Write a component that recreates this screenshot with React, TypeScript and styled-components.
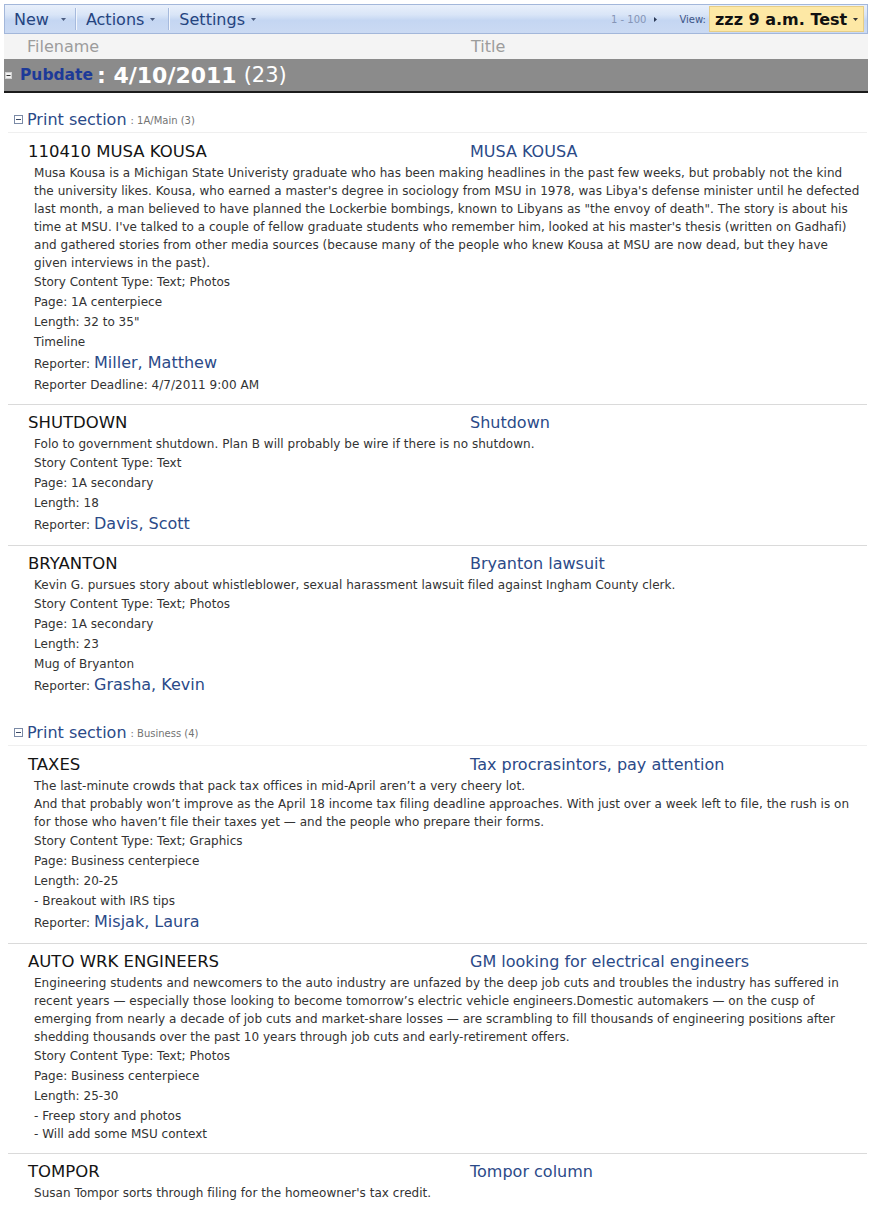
import React from "react";
import styled, { createGlobalStyle } from "styled-components";

const GlobalStyle = createGlobalStyle`
  html, body { margin: 0; padding: 0; background: #ffffff; overflow: hidden; }
  body { font-family: "DejaVu Sans", Verdana, sans-serif; color: #222; }
`;

const Page = styled.div`
  width: 864px;
  padding: 4px 8px 0 4px;
`;

/* ---------- toolbar ---------- */
const Toolbar = styled.div`
  display: flex;
  align-items: center;
  height: 28px;
  border: 1px solid #a3b7da;
  background: linear-gradient(
    to bottom,
    #e9f0fb 0%,
    #d9e5f7 35%,
    #c4d6f2 55%,
    #cbdaf3 100%
  );
  padding: 0 3px 0 9px;
`;

const Menu = styled.div<{ $gap: number; $pad: number }>`
  display: flex;
  align-items: center;
  gap: ${(p) => p.$gap}px;
  padding-right: ${(p) => p.$pad}px;
  font-size: 16px;
  color: #25447f;
`;

const Sep = styled.div`
  width: 1px;
  height: 22px;
  background: #a6badd;
  box-shadow: 1px 0 0 #f2f6fd;
  margin: 0 10px 0 9px;
`;

const RightTools = styled.div`
  margin-left: auto;
  display: flex;
  align-items: center;
  height: 100%;
`;

const Paging = styled.span`
  font-size: 10px;
  color: #8595b6;
  margin-right: 8px;
`;

const ViewLabel = styled.span`
  font-size: 10px;
  color: #3d5587;
  margin: 0 3px 0 22px;
`;

const ViewBox = styled.div`
  display: flex;
  align-items: center;
  gap: 6px;
  height: 24px;
  width: 148px;
  padding: 0 0 0 5px;
  background: #fde8a5;
  border: 1px solid #e6cd86;
  font-size: 16px;
  font-weight: bold;
  color: #111;
`;

const Caret = ({ color = "#4b5c80" }: { color?: string }) => (
  <svg width="5" height="3" viewBox="0 0 5 3">
    <path d="M0 0H5L2.5 3Z" fill={color} />
  </svg>
);

const RightArrow = () => (
  <svg width="3" height="5" viewBox="0 0 3 5">
    <path d="M0 0L3 2.5L0 5Z" fill="#2d3b57" />
  </svg>
);

/* ---------- column header ---------- */
const ColumnHeader = styled.div`
  display: grid;
  grid-template-columns: 444px 1fr;
  align-items: center;
  height: 25px;
  padding-left: 23px;
  background: #f4f4f4;
  font-size: 16px;
  color: #9c9c9c;
`;

/* ---------- group header ---------- */
const GroupHeader = styled.div`
  display: flex;
  align-items: center;
  height: 32px;
  margin-bottom: 1px;
  padding-left: 1px;
  background: #8b8b8b;
  border-bottom: 2px solid #1b1b1b;
  color: #fff;
`;

const GroupKey = styled.span`
  font-size: 15.5px;
  font-weight: bold;
  color: #1d3a98;
  margin-left: 8px;
`;

const GroupValue = styled.span`
  font-size: 22px;
  font-weight: bold;
  margin-left: 4px;
`;

const GroupCount = styled.span`
  font-size: 21px;
  margin-left: 7px;
`;

const GroupToggle = () => (
  <svg width="7" height="7" viewBox="0 0 7 7">
    <rect x="0.5" y="0.5" width="6" height="6" fill="#f2f2f2" stroke="#d0d0d0" />
    <path d="M1.5 3.5H5.5" stroke="#333" strokeWidth="1" />
  </svg>
);

/* ---------- section ---------- */
const SectionHeader = styled.div`
  display: flex;
  align-items: center;
  height: 22px;
  margin: 15px 1px 0 4px;
  padding: 0 0 2px 6px;
  border-bottom: 1px solid #efefef;
`;

const SectionTitle = styled.span`
  font-size: 16px;
  color: #2b4a88;
  margin-left: 4px;
`;

const SectionCount = styled.span`
  font-size: 10px;
  color: #737373;
  margin-left: 4px;
  padding-top: 3px;
`;

const SectionToggle = () => (
  <svg width="9" height="9" viewBox="0 0 9 9">
    <rect x="0.5" y="0.5" width="8" height="8" fill="#fff" stroke="#7b8aa6" />
    <path d="M2 4.5H7" stroke="#3b4a66" strokeWidth="1" />
  </svg>
);

/* ---------- items ---------- */
const Item = styled.div<{ $first: boolean }>`
  margin: 0 1px 0 4px;
  padding: ${(p) => (p.$first ? "8px" : "7px")} 0 9px;
  border-top: ${(p) => (p.$first ? "none" : "1px solid #dadada")};
`;

const ItemHead = styled.div`
  display: grid;
  grid-template-columns: 442px 1fr;
  padding-left: 20px;
  line-height: 22px;
`;

const FileName = styled.span`
  font-size: 16.5px;
  color: #141414;
`;

const TitleLink = styled.a`
  font-size: 16px;
  color: #2b4a88;
  text-decoration: none;
`;

const Body = styled.div`
  margin-top: 1px;
  padding: 0 5px 0 26px;
  font-size: 12px;
  letter-spacing: 0.03px;
  line-height: 18px;
  color: #333;
`;

const Para = styled.div``;

const Field = styled.div<{ $tall?: boolean }>`
  padding: ${(p) => (p.$tall ? "1px 0 0" : "1px 0")};
  line-height: ${(p) => (p.$tall ? "22px" : "18px")};
`;

const PersonLink = styled.a`
  font-size: 16px;
  line-height: 16px;
  letter-spacing: 0;
  color: #2b4a88;
  text-decoration: none;
`;

type FieldT = { text?: string; lines?: string[]; reporter?: string };
type ItemT = { file: string; title: string; body: string[]; fields: FieldT[] };
type SectionT = { name: string; items: ItemT[] };

const sections: SectionT[] = [
  {
    name: "1A/Main (3)",
    items: [
      {
        file: "110410 MUSA KOUSA",
        title: "MUSA KOUSA",
        body: [
          "Musa Kousa is a Michigan State Univeristy graduate who has been making headlines in the past few weeks, but probably not the kind the university likes. Kousa, who earned a master's degree in sociology from MSU in 1978, was Libya's defense minister until he defected last month, a man believed to have planned the Lockerbie bombings, known to Libyans as \"the envoy of death\". The story is about his time at MSU. I've talked to a couple of fellow graduate students who remember him, looked at his master's thesis (written on Gadhafi) and gathered stories from other media sources (because many of the people who knew Kousa at MSU are now dead, but they have given interviews in the past).",
        ],
        fields: [
          { text: "Story Content Type: Text; Photos" },
          { text: "Page: 1A centerpiece" },
          { text: 'Length: 32 to 35"' },
          { text: "Timeline" },
          { reporter: "Miller, Matthew" },
          { text: "Reporter Deadline: 4/7/2011 9:00 AM" },
        ],
      },
      {
        file: "SHUTDOWN",
        title: "Shutdown",
        body: ["Folo to government shutdown. Plan B will probably be wire if there is no shutdown."],
        fields: [
          { text: "Story Content Type: Text" },
          { text: "Page: 1A secondary" },
          { text: "Length: 18" },
          { reporter: "Davis, Scott" },
        ],
      },
      {
        file: "BRYANTON",
        title: "Bryanton lawsuit",
        body: [
          "Kevin G. pursues story about whistleblower, sexual harassment lawsuit filed against Ingham County clerk.",
        ],
        fields: [
          { text: "Story Content Type: Text; Photos" },
          { text: "Page: 1A secondary" },
          { text: "Length: 23" },
          { text: "Mug of Bryanton" },
          { reporter: "Grasha, Kevin" },
        ],
      },
    ],
  },
  {
    name: "Business (4)",
    items: [
      {
        file: "TAXES",
        title: "Tax procrasintors, pay attention",
        body: [
          "The last-minute crowds that pack tax offices in mid-April aren\u2019t a very cheery lot.",
          "And that probably won\u2019t improve as the April 18 income tax filing deadline approaches. With just over a week left to file, the rush is on for those who haven\u2019t file their taxes yet \u2014 and the people who prepare their forms.",
        ],
        fields: [
          { text: "Story Content Type: Text; Graphics" },
          { text: "Page: Business centerpiece" },
          { text: "Length: 20-25" },
          { text: "- Breakout with IRS tips" },
          { reporter: "Misjak, Laura" },
        ],
      },
      {
        file: "AUTO WRK ENGINEERS",
        title: "GM looking for electrical engineers",
        body: [
          "Engineering students and newcomers to the auto industry are unfazed by the deep job cuts and troubles the industry has suffered in recent years \u2014 especially those looking to become tomorrow\u2019s electric vehicle engineers.Domestic automakers \u2014 on the cusp of emerging from nearly a decade of job cuts and market-share losses \u2014 are scrambling to fill thousands of engineering positions after shedding thousands over the past 10 years through job cuts and early-retirement offers.",
        ],
        fields: [
          { text: "Story Content Type: Text; Photos" },
          { text: "Page: Business centerpiece" },
          { text: "Length: 25-30" },
          { lines: ["- Freep story and photos", "- Will add some MSU context"] },
        ],
      },
      {
        file: "TOMPOR",
        title: "Tompor column",
        body: ["Susan Tompor sorts through filing for the homeowner's tax credit."],
        fields: [],
      },
    ],
  },
];

const renderField = (f: FieldT, i: number) => {
  if (f.reporter) {
    return (
      <Field key={i} $tall>
        Reporter: <PersonLink href="#">{f.reporter}</PersonLink>
      </Field>
    );
  }
  if (f.lines) {
    return (
      <Field key={i}>
        {f.lines.map((l, j) => (
          <div key={j}>{l}</div>
        ))}
      </Field>
    );
  }
  return <Field key={i}>{f.text}</Field>;
};

export default function App() {
  return (
    <>
      <GlobalStyle />
      <Page>
        <Toolbar>
          <Menu $gap={12} $pad={0}>
            New <Caret />
          </Menu>
          <Sep />
          <Menu $gap={6} $pad={4}>
            Actions <Caret />
          </Menu>
          <Sep />
          <Menu $gap={6} $pad={0}>
            Settings <Caret />
          </Menu>
          <RightTools>
            <Paging>1 - 100</Paging>
            <RightArrow />
            <ViewLabel>View:</ViewLabel>
            <ViewBox>
              zzz 9 a.m. Test <Caret color="#333" />
            </ViewBox>
          </RightTools>
        </Toolbar>

        <ColumnHeader>
          <span>Filename</span>
          <span>Title</span>
        </ColumnHeader>

        <GroupHeader>
          <GroupToggle />
          <GroupKey>Pubdate</GroupKey>
          <GroupValue>: 4/10/2011</GroupValue>
          <GroupCount>(23)</GroupCount>
        </GroupHeader>

        {sections.map((s, si) => (
          <React.Fragment key={si}>
            <SectionHeader>
              <SectionToggle />
              <SectionTitle>Print section</SectionTitle>
              <SectionCount>: {s.name}</SectionCount>
            </SectionHeader>
            {s.items.map((it, ii) => (
              <Item key={ii} $first={ii === 0}>
                <ItemHead>
                  <FileName>{it.file}</FileName>
                  <TitleLink href="#">{it.title}</TitleLink>
                </ItemHead>
                <Body>
                  {it.body.map((p, pi) => (
                    <Para key={pi}>{p}</Para>
                  ))}
                  {it.fields.map(renderField)}
                </Body>
              </Item>
            ))}
          </React.Fragment>
        ))}
      </Page>
    </>
  );
}
